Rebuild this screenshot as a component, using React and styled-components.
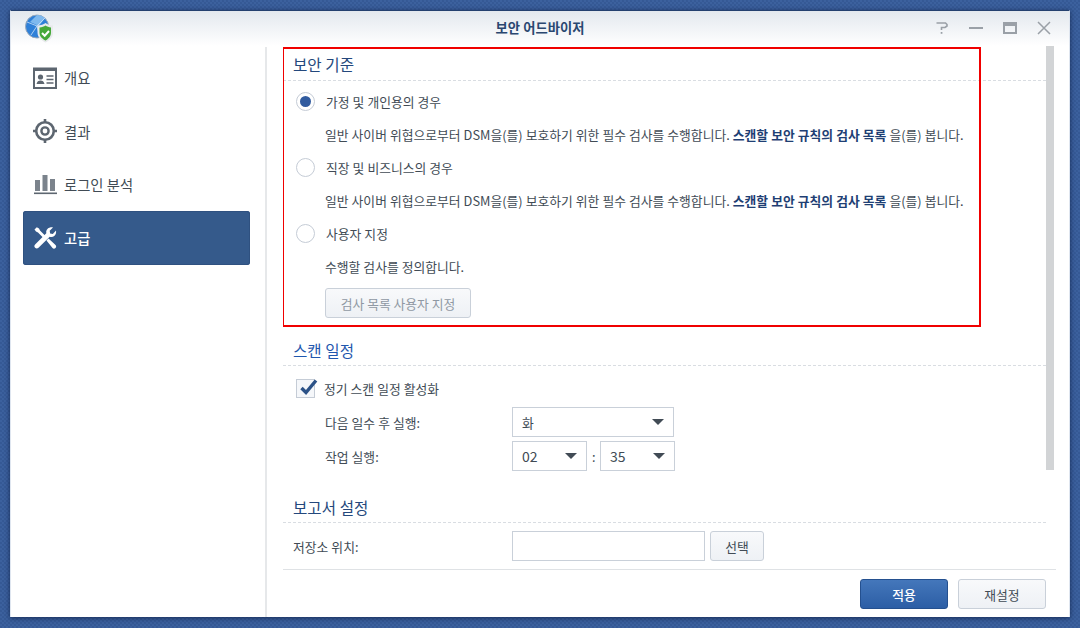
import React from "react"
import styled, { createGlobalStyle } from "styled-components"

const GlobalStyle = createGlobalStyle`
  html, body {
    margin: 0;
    padding: 0;
    height: 100%;
  }
  body {
    font-family: "Noto Sans CJK KR", "Noto Sans", "Liberation Sans", sans-serif;
    font-size: 12.8px;
    word-spacing: 0.17px;
    color: #414b55;
    background-color: #3c619e;
    background-image:
      linear-gradient(45deg, rgba(30, 60, 120, 0.22) 25%, transparent 25%, transparent 75%, rgba(30, 60, 120, 0.22) 75%),
      linear-gradient(45deg, rgba(30, 60, 120, 0.22) 25%, transparent 25%, transparent 75%, rgba(30, 60, 120, 0.22) 75%);
    background-size: 4px 4px;
    background-position: 0 0, 2px 2px;
  }
`

const Desktop = styled.div`
  box-sizing: border-box;
  width: 1080px;
  height: 628px;
  padding: 10px 10px 11px 10px;
  overflow: hidden;
`

const Window = styled.div`
  box-sizing: border-box;
  height: 100%;
  display: flex;
  flex-direction: column;
  background: #fff;
  border-top: 1px solid #24406f;
  border-left: 1px solid #dfe6f0;
  border-right: 1px solid #dfe6f0;
  box-shadow: 0 1px 5px rgba(10, 25, 60, 0.75);
`

const TitleBar = styled.header`
  box-sizing: border-box;
  flex: 0 0 35px;
  padding-bottom: 2px;
  display: grid;
  grid-template-columns: 1fr auto 1fr;
  align-items: center;
  background: linear-gradient(#e3e8ee, #ffffff);
`

const AppLogo = styled.div`
  display: flex;
  padding-left: 13px;
`

const WindowTitle = styled.div`
  font-size: 13.3px;
  font-weight: 700;
  color: #2a4770;
`

const WindowControls = styled.div`
  display: flex;
  justify-content: flex-end;
  align-items: center;
  gap: 20px;
  padding-right: 18px;
`

const Main = styled.div`
  flex: 1;
  display: flex;
  min-height: 0;
`

const Sidebar = styled.nav`
  box-sizing: border-box;
  flex: 0 0 256px;
  padding: 4px 15px 0 12px;
  border-right: 2px solid #e6e8ea;
  margin-top: 1px;
`

const NavItem = styled.div`
  height: 53.4px;
  display: flex;
  align-items: center;
  gap: 7px;
  padding-left: 10px;
  font-size: 14.3px;
  border-radius: 3px;
  color: ${(p) => (p.$active ? "#fff" : "#414b55")};
  background: ${(p) => (p.$active ? "#355a8b" : "transparent")};
  font-weight: ${(p) => (p.$active ? 500 : 400)};
  box-shadow: ${(p) => (p.$active ? "0 0 0 1px #2f5180 inset" : "none")};

  svg {
    flex: 0 0 24px;
  }
`

const ContentColumn = styled.div`
  flex: 1;
  min-width: 0;
  display: flex;
  flex-direction: column;
`

const ContentRow = styled.div`
  flex: 1;
  min-height: 0;
  display: flex;
  padding-left: 16px;
`

const Scroller = styled.div`
  flex: 0 0 763px;
  overflow: hidden;
`

const ScrollThumb = styled.div`
  flex: 0 0 8px;
  height: 424px;
  background: #d2d4d6;
`

const Section = styled.section`
  position: relative;
  padding-bottom: ${(p) => p.$gap}px;
`

const RedFrame = styled.div`
  position: absolute;
  left: -1px;
  top: 1px;
  width: 699px;
  height: 280px;
  box-sizing: border-box;
  border: 2px solid #f00000;
  pointer-events: none;
`

const SectionTitle = styled.h2`
  box-sizing: border-box;
  height: ${(p) => p.$height || 35}px;
  margin: 0;
  padding: 0 0 ${(p) => p.$bottom || 5}px 10px;
  display: flex;
  align-items: flex-end;
  font-size: 15.6px;
  line-height: 20px;
  font-weight: 400;
  color: ${(p) => p.$color || "#24487c"};
  border-bottom: 1px dashed #d9dde2;
`

const RadioList = styled.div`
  padding-top: 4px;
`

const RadioRow = styled.div`
  height: 33px;
  display: flex;
  align-items: center;
  gap: 11px;
  padding-left: 13px;
`

const Radio = styled.span`
  box-sizing: border-box;
  flex: 0 0 19px;
  height: 19px;
  border-radius: 50%;
  border: 1px solid #c5ccd6;
  background: #fff;
  display: flex;
  align-items: center;
  justify-content: center;

  &::after {
    content: "";
    display: ${(p) => (p.$checked ? "block" : "none")};
    width: 11px;
    height: 11px;
    border-radius: 50%;
    background: #315b9f;
  }
`

const Description = styled.div`
  height: 33px;
  display: flex;
  align-items: center;
  padding-left: 42px;
  white-space: pre;
`

const Strong = styled.b`
  color: #1f3f74;
  font-weight: 700;
`

const Button = styled.button`
  box-sizing: border-box;
  height: 30px;
  width: ${(p) => p.$width}px;
  padding: 0;
  font: inherit;
  border-radius: 3px;
  color: ${(p) => p.$color || "#414b55"};
  border: 1px solid #c9d0d9;
  background: linear-gradient(#f8f9fb, #eef1f5);
`

const DisabledButton = styled(Button)`
  margin: 5px 0 0 42px;
  display: block;
`

const PrimaryButton = styled(Button)`
  color: #fff;
  font-weight: 500;
  border-color: #24508f;
  background: linear-gradient(#4477bb, #2c5ea5);
`

const CheckRow = styled.div`
  height: 33px;
  margin-top: 6px;
  display: flex;
  align-items: center;
  gap: 9px;
  padding-left: 13px;
`

const CheckBox = styled.span`
  box-sizing: border-box;
  position: relative;
  flex: 0 0 19px;
  height: 19px;
  border: 1px solid #c5ccd6;
  background: #f5f7fa;

  svg {
    position: absolute;
    left: 1px;
    top: -4px;
  }
`

const FieldRow = styled.div`
  height: 34px;
  display: grid;
  grid-template-columns: 229px auto;
  align-items: center;
  margin-top: ${(p) => p.$top || 0}px;
`

const FieldLabel = styled.span`
  padding-left: ${(p) => p.$indent}px;
`

const Controls = styled.div`
  display: flex;
  align-items: center;
  gap: ${(p) => p.$gap || 0}px;
`

const TimeColon = styled.span`
  width: 3px;
`

const Select = styled.div`
  box-sizing: border-box;
  width: ${(p) => p.$width}px;
  height: 30px;
  display: flex;
  align-items: center;
  justify-content: space-between;
  padding: 0 9px;
  border: 1px solid #c9d0d9;
  font-size: ${(p) => p.$size || 14}px;

  &::after {
    content: "";
    width: 0;
    height: 0;
    border-left: 6px solid transparent;
    border-right: 6px solid transparent;
    border-top: 6px solid #414b55;
  }
`

const TextInput = styled.div`
  box-sizing: border-box;
  width: 193px;
  height: 30px;
  border: 1px solid #c9d0d9;
  background: #fff;
`

const Footer = styled.footer`
  box-sizing: border-box;
  flex: 0 0 48px;
  margin: 0 13px 0 16px;
  padding: 9px 10px 0 0;
  display: flex;
  justify-content: flex-end;
  gap: 10px;
  border-top: 1px solid #dfe2e5;
`

const GlobeLogo = () => (
  <svg width="30" height="30" viewBox="0 0 30 30">
    <circle cx="13" cy="13.500" r="11.500" fill="#2f80d8" stroke="#9aa9ba" />
    <path d="M13 2a11.500 11.500 0 0 1 8 3l-6 8-9-4z" fill="#7fb9ee" />
    <path d="M3 9l10 4-6 9M13 13l8-8M13 13l3 11" stroke="#cfe5f8" strokeWidth="0.8" fill="none" />
    <path d="M13.500 12.500c3.500 0 6-1 8-2.500 2 1.500 4.500 2.500 7.500 2.500v7c0 5-3.500 8-7.500 10-4-2-8-5-8-10z" fill="#e8eaec" />
    <path d="M15.500 14.500c2.500-.2 4.500-1 6-2 1.500 1 3.500 1.800 5.500 2v5c0 4-2.700 6.500-5.500 8-3-1.500-6-4-6-8z" fill="#46a83a" />
    <path d="M18 20l2.700 2.700 4.300-4.700" stroke="#fff" strokeWidth="2" fill="none" />
  </svg>
)

const HelpIcon = () => (
  <svg width="14" height="14" viewBox="0 0 14 14" fill="none" stroke="#9aa0a7" strokeWidth="1.600">
    <path d="M1.500 2h9l1.500 1.500v1.500l-2 1.500H6.500v2.500" />
    <rect x="5.700" y="11" width="1.700" height="1.800" fill="#9aa0a7" stroke="none" />
  </svg>
)

const MinimizeIcon = () => (
  <svg width="14" height="14" viewBox="0 0 14 14">
    <rect x="0" y="6" width="14" height="2" fill="#9aa0a7" />
  </svg>
)

const MaximizeIcon = () => (
  <svg width="14" height="14" viewBox="0 0 14 14" fill="none" stroke="#9aa0a7" strokeWidth="2">
    <rect x="1" y="2" width="12" height="10" />
    <path d="M0 3.500h14" strokeWidth="3" />
  </svg>
)

const CloseIcon = () => (
  <svg width="14" height="14" viewBox="0 0 14 14" stroke="#9aa0a7" strokeWidth="1.500">
    <path d="M1 1l12 12M13 1L1 13" />
  </svg>
)

const OverviewIcon = () => (
  <svg width="24" height="22" viewBox="0 0 24 22">
    <rect x="1" y="1.500" width="22" height="19.500" fill="#fff" stroke="#5d6670" strokeWidth="2" />
    <rect x="1" y="1" width="22" height="3" fill="#5d6670" />
    <circle cx="7.500" cy="10" r="2.600" fill="#5d6670" />
    <path d="M3.500 17c.5-2.500 2-3.500 4-3.500s3.500 1 4 3.500z" fill="#5d6670" />
    <path d="M13.500 9h7M13.500 12.500h7M13.500 16h7" stroke="#5d6670" strokeWidth="1.500" />
  </svg>
)

const ResultIcon = () => (
  <svg width="24" height="24" viewBox="0 0 24 24" fill="none" stroke="#5d6670">
    <circle cx="12" cy="12" r="8.800" strokeWidth="2.600" />
    <circle cx="12" cy="12" r="3.600" strokeWidth="2.400" />
    <path d="M12 0v4M12 20v4M0 12h4M20 12h4" strokeWidth="2.600" />
  </svg>
)

const ChartIcon = () => (
  <svg width="24" height="22" viewBox="0 0 24 22" fill="#7b838c">
    <rect x="2" y="7" width="5" height="11" />
    <rect x="9.500" y="2" width="5" height="16" />
    <rect x="17" y="6" width="5" height="12" />
    <rect x="1" y="19.500" width="23" height="1.600" fill="#5d6670" />
  </svg>
)

const ToolsIcon = () => (
  <svg width="24" height="24" viewBox="0 0 24 24" fill="#fff">
    <path d="M1.500 3.500L3.800 1.200 6 2.400l1 2 5.500 5.500-2 2L5 6.500l-2-1z" />
    <path d="M17 1.500c1-.3 2-.3 3 0l-3.300 3.300.4 2.700 2.700.4L23 4.500c.4 2.300-.2 4-1.500 5.200-1.300 1.200-3 1.500-4.800 1L5.500 21.800c-1 1-2.500 1-3.400 0-1-1-1-2.400 0-3.400L13.300 7.200c-.6-2.600.8-4.900 3.700-5.700z" />
    <path d="M13.500 14.500l2-2 7 6.500c.9 1 .9 2.200 0 3-.9.900-2.200.9-3 0z" />
  </svg>
)

const CheckMark = () => (
  <svg width="22" height="22" viewBox="0 0 22 22" fill="none" stroke="#2c5287" strokeWidth="3.400">
    <path d="M3.500 12l4.500 4.500 10-12" />
  </svg>
)

const navItems = [
  { label: "개요", icon: <OverviewIcon /> },
  { label: "결과", icon: <ResultIcon /> },
  { label: "로그인 분석", icon: <ChartIcon /> },
  { label: "고급", icon: <ToolsIcon />, active: true },
]

const ScanNote = () => (
  <Description>
    {"일반 사이버 위협으로부터 DSM을(를) 보호하기 위한 필수 검사를 수행합니다. "}
    <Strong>스캔할 보안 규칙의 검사 목록</Strong>
    {" 을(를) 봅니다."}
  </Description>
)

const App = () => (
  <>
    <GlobalStyle />
    <Desktop>
      <Window>
        <TitleBar>
          <AppLogo>
            <GlobeLogo />
          </AppLogo>
          <WindowTitle>보안 어드바이저</WindowTitle>
          <WindowControls>
            <HelpIcon />
            <MinimizeIcon />
            <MaximizeIcon />
            <CloseIcon />
          </WindowControls>
        </TitleBar>
        <Main>
          <Sidebar>
            {navItems.map((item) => (
              <NavItem key={item.label} $active={item.active}>
                {item.icon}
                {item.label}
              </NavItem>
            ))}
          </Sidebar>
          <ContentColumn>
            <ContentRow>
              <Scroller>
                <Section $gap={20}>
                  <SectionTitle $bottom={6}>보안 기준</SectionTitle>
                  <RadioList>
                    <RadioRow>
                      <Radio $checked />
                      가정 및 개인용의 경우
                    </RadioRow>
                    <ScanNote />
                    <RadioRow>
                      <Radio />
                      직장 및 비즈니스의 경우
                    </RadioRow>
                    <ScanNote />
                    <RadioRow>
                      <Radio />
                      사용자 지정
                    </RadioRow>
                    <Description>수행할 검사를 정의합니다.</Description>
                    <DisabledButton $width={146} $color="#8f98a3">
                      검사 목록 사용자 지정
                    </DisabledButton>
                  </RadioList>
                  <RedFrame />
                </Section>
                <Section $gap={22}>
                  <SectionTitle $height={28} $color="#1f57ae">
                    스캔 일정
                  </SectionTitle>
                  <CheckRow>
                    <CheckBox>
                      <CheckMark />
                    </CheckBox>
                    정기 스캔 일정 활성화
                  </CheckRow>
                  <FieldRow>
                    <FieldLabel $indent={42}>다음 일수 후 실행:</FieldLabel>
                    <Select $width={162} $size={12.8}>화</Select>
                  </FieldRow>
                  <FieldRow>
                    <FieldLabel $indent={42}>작업 실행:</FieldLabel>
                    <Controls $gap={5}>
                      <Select $width={75}>02</Select>
                      <TimeColon>:</TimeColon>
                      <Select $width={75}>35</Select>
                    </Controls>
                  </FieldRow>
                </Section>
                <Section $gap={0}>
                  <SectionTitle $height={28}>보고서 설정</SectionTitle>
                  <FieldRow $top={6}>
                    <FieldLabel $indent={10}>저장소 위치:</FieldLabel>
                    <Controls $gap={5}>
                      <TextInput />
                      <Button $width={54}>선택</Button>
                    </Controls>
                  </FieldRow>
                </Section>
              </Scroller>
              <ScrollThumb />
            </ContentRow>
            <Footer>
              <PrimaryButton $width={88}>적용</PrimaryButton>
              <Button $width={88}>재설정</Button>
            </Footer>
          </ContentColumn>
        </Main>
      </Window>
    </Desktop>
  </>
)

export default App
